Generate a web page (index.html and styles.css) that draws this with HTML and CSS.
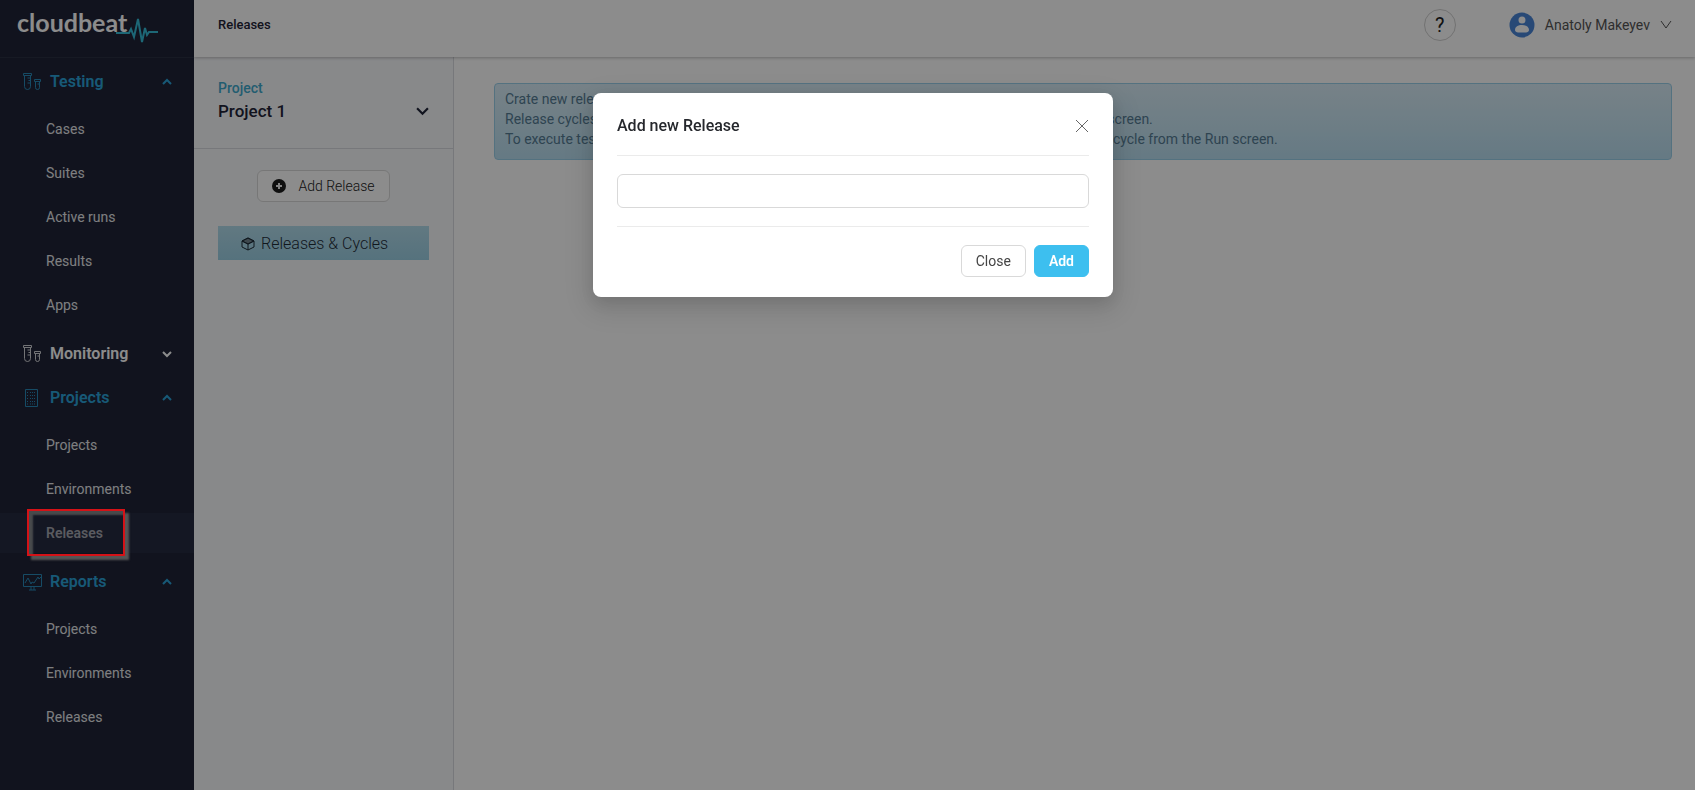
FILE: index.html
```html
<!DOCTYPE html>
<html lang="en">
<head>
    <meta charset="UTF-8">
    <meta name="viewport" content="width=device-width, initial-scale=1.0">
    <title>Releases - cloudbeat</title>
    <link rel="stylesheet" href="styles.css">
</head>
<body>

<!-- Shared icons -->
<svg class="icon-defs" aria-hidden="true">
    <symbol id="icon-tubes" viewBox="0 0 20 20">
        <path d="M1.500 1.500h8v2h-8zM2.500 3.500v11a3 3 0 0 0 6 0v-11M5.500 6h3M6.500 8.500h2M5.500 11h3M12.500 7.500h6v2h-6zM13.500 9.500v6a2 2 0 0 0 4 0v-6M15.500 12h2"/>
    </symbol>
    <symbol id="icon-list" viewBox="0 0 20 20">
        <path d="M3.500 1.500h12v17h-12z"/>
        <path stroke-dasharray="1 1" d="M5 4.500h2M5 7.500h2M5 10.500h2M5 13.500h2M5 16h2M8 4.500h6M8 7.500h6M8 10.500h6M8 13.500h6M8 16h6"/>
    </symbol>
    <symbol id="icon-monitor" viewBox="0 0 20 20">
        <path d="M1.500 2.500h18v12h-18zM9 15v3M12 15v3M7 18h7"/>
        <path d="M3 11l3-5 3 6 1-2 2 1 4-6 1 2 2-2"/>
    </symbol>
    <symbol id="icon-up" viewBox="0 0 12 12"><path d="M2 8l4-4 4 4"/></symbol>
    <symbol id="icon-down" viewBox="0 0 12 12"><path d="M2 4l4 4 4-4"/></symbol>
</svg>

<div class="layout">
    <aside class="sidebar">
        <a class="logo" href="#">
            <span>cloudbeat</span>
            <svg class="pulse" viewBox="0 0 42 28"><path d="M0 17h13l2-4 3 8 4-18 4 23 3-14 2 7 2-3h9"/></svg>
        </a>
        <nav class="menu">
            <button class="group open"><svg class="group-icon"><use href="#icon-tubes"/></svg>Testing<svg class="arrow"><use href="#icon-up"/></svg></button>
            <ul class="submenu">
                <li><a href="#">Cases</a></li>
                <li><a href="#">Suites</a></li>
                <li><a href="#">Active runs</a></li>
                <li><a href="#">Results</a></li>
                <li><a href="#">Apps</a></li>
            </ul>
            <button class="group"><svg class="group-icon"><use href="#icon-tubes"/></svg>Monitoring<svg class="arrow"><use href="#icon-down"/></svg></button>
            <button class="group open"><svg class="group-icon"><use href="#icon-list"/></svg>Projects<svg class="arrow"><use href="#icon-up"/></svg></button>
            <ul class="submenu">
                <li><a href="#">Projects</a></li>
                <li><a href="#">Environments</a></li>
                <li class="active"><a href="#">Releases</a><span class="callout"></span></li>
            </ul>
            <button class="group open"><svg class="group-icon"><use href="#icon-monitor"/></svg>Reports<svg class="arrow"><use href="#icon-up"/></svg></button>
            <ul class="submenu">
                <li><a href="#">Projects</a></li>
                <li><a href="#">Environments</a></li>
                <li><a href="#">Releases</a></li>
            </ul>
        </nav>
    </aside>

    <div class="page">
        <header class="topbar">
            <h1>Releases</h1>
            <button class="help" aria-label="Help">?</button>
            <button class="user">
                <svg class="avatar" viewBox="0 0 26 26">
                    <circle cx="13" cy="13" r="12.500" fill="#4a86d8"/>
                    <circle cx="13" cy="8" r="3.500" fill="#fff"/>
                    <path d="M6 18c0-3.500 3-5 7-5s7 1.500 7 5c0 1.500-1.500 2.500-3 2.500H9c-1.500 0-3-1-3-2.500z" fill="#fff"/>
                </svg>
                Anatoly Makeyev
                <svg class="user-arrow" viewBox="0 0 12 12"><path d="M1 2l5 7 5-7"/></svg>
            </button>
        </header>

        <div class="body">
            <section class="panel">
                <button class="project">
                    <span class="project-label">Project</span>
                    <span class="project-name">Project 1<svg class="project-arrow" viewBox="0 0 12 12"><path d="M1 3l5 5 5-5"/></svg></span>
                </button>
                <div class="releases">
                    <button class="btn add-release">
                        <svg class="plus" viewBox="0 0 14 14"><circle cx="7" cy="7" r="7"/><path d="M7 4v6M4 7h6"/></svg>
                        Add Release
                    </button>
                    <a class="tree-item" href="#">
                        <svg class="cube" viewBox="0 0 14 14"><path class="cube-top" d="M1 4l6-3 6 3-6 3z"/><path d="M1 4l6-3 6 3v6l-6 3-6-3zM1 4l6 3 6-3M7 7v6"/></svg>
                        Releases &amp; Cycles
                    </a>
                </div>
            </section>

            <main class="content">
                <div class="alert">
                    Crate new release by clicking on the Add Release button.<br>
                    Release cycles can be added to a selected release with right click menu of the Releases &amp; Cycles screen.<br>
                    To execute tests as part of a release or cycle, select the test case or suite and later set its release/cycle from the Run screen.
                </div>
            </main>
        </div>
    </div>
</div>

<div class="overlay">
    <form class="modal" role="dialog" aria-labelledby="modalTitle">
        <div class="modal-header">
            <h2 id="modalTitle">Add new Release</h2>
            <button type="button" class="modal-close" aria-label="Close dialog">
                <svg viewBox="0 0 14 14"><path d="M1 1l12 12M13 1L1 13"/></svg>
            </button>
        </div>
        <div class="modal-body">
            <input type="text" aria-label="Release name">
        </div>
        <div class="modal-footer">
            <button type="button" class="btn">Close</button>
            <button type="button" class="btn primary">Add</button>
        </div>
    </form>
</div>

</body>
</html>
```

FILE: styles.css
```css
* {
    box-sizing: border-box;
}

body {
    margin: 0;
    font-family: Roboto, "Liberation Sans", sans-serif;
    font-size: 14px;
    line-height: 20px;
    color: #3c3f48;
    background-color: #fff;
}

button, input {
    font: inherit;
    color: inherit;
}

button {
    cursor: pointer;
}

a {
    color: inherit;
    text-decoration: none;
}

svg {
    flex: none;
    fill: none;
    stroke: currentColor;
}

.icon-defs {
    position: absolute;
    width: 0;
    height: 0;
}

.layout {
    display: flex;
    min-height: 100vh;
}

/* Sidebar */
.sidebar {
    flex: none;
    width: 194px;
    background-color: #1f2438;
    color: #e6e7ea;
}

.logo {
    display: flex;
    height: 58px;
    padding: 7px 0 0 17px;
    border-bottom: 1px solid #2b3043;
    font-family: Lato, sans-serif;
    font-size: 25px;
    line-height: 30px;
    font-weight: 700;
    color: #fff;
}

.pulse {
    width: 42px;
    height: 28px;
    margin: 9px 0 0 -11px;
    color: #35bcd8;
    stroke-width: 2;
}

.menu {
    padding-top: 4px;
}

.group {
    display: flex;
    align-items: center;
    width: 100%;
    height: 40px;
    margin-bottom: 4px;
    padding: 0 21px 0 22px;
    border: none;
    background: none;
    font-size: 16px;
    font-weight: 600;
    color: #fff;
}

.group.open {
    color: #2ba3d9;
}

.group-icon {
    width: 20px;
    height: 20px;
    margin-right: 8px;
    stroke-width: 1;
    opacity: 0.8;
}

.arrow {
    width: 12px;
    height: 12px;
    margin-left: auto;
    stroke-width: 2;
}

.submenu {
    list-style: none;
    margin: 0;
    padding: 3px 0 5px;
}

.submenu li {
    position: relative;
    height: 40px;
    margin-bottom: 4px;
}

.submenu a {
    display: block;
    padding-left: 46px;
    line-height: 40px;
}

.submenu .active {
    background-color: #262b40;
    color: #a5a7b0;
    font-weight: 600;
}

/* Marker frame around the active item, drawn above the mask */
.callout {
    position: absolute;
    z-index: 20;
    left: 27px;
    top: -4px;
    width: 98px;
    height: 47px;
    border: 2px solid #d41217;
    box-shadow: 4px 4px 2px #555, inset 4px 4px 2px #484a4c;
}

/* Top bar */
.page {
    display: flex;
    flex-direction: column;
    flex: 1;
    min-width: 0;
}

.topbar {
    display: flex;
    align-items: center;
    height: 57px;
    padding: 0 23px 7px 24px;
    box-shadow: 0 1px 3px rgba(0, 0, 0, 0.25);
    z-index: 1;
}

.topbar h1 {
    margin: 0 auto 0 0;
    font-size: 13px;
    font-weight: 500;
    color: #1f2438;
}

.help {
    width: 32px;
    height: 32px;
    margin-right: 53px;
    padding: 0;
    border: 1px solid #d0d0d0;
    border-radius: 50%;
    background: none;
    font-size: 20px;
    color: #222;
}

.user {
    display: flex;
    align-items: center;
    padding: 0;
    border: none;
    background: none;
    color: #555;
}

.avatar {
    width: 26px;
    height: 26px;
    margin-right: 10px;
    stroke: none;
}

.user-arrow {
    width: 12px;
    height: 12px;
    margin-left: 10px;
}

/* Project panel */
.body {
    display: flex;
    flex: 1;
}

.panel {
    flex: none;
    width: 260px;
    background-color: #f8f9fc;
    border-right: 1px solid #d9dbe0;
}

.project {
    display: flex;
    flex-direction: column;
    width: 100%;
    height: 92px;
    padding: 21px 24px 0;
    border: none;
    border-bottom: 1px solid #d9dbe0;
    background: none;
    text-align: left;
}

.project-label {
    font-weight: 500;
    color: #3fa9cc;
}

.project-name {
    display: flex;
    align-items: center;
    justify-content: space-between;
    width: 100%;
    font-size: 17px;
    line-height: 26px;
    font-weight: 500;
    color: #1f2438;
}

.project-arrow {
    width: 13px;
    height: 13px;
    stroke-width: 2;
}

.releases {
    display: flex;
    flex-direction: column;
    align-items: center;
    gap: 24px;
    padding: 21px 24px;
}

.btn {
    height: 32px;
    padding: 0 14px;
    border: 1px solid #d9d9d9;
    border-radius: 6px;
    background-color: #fff;
    color: #444;
}

.add-release {
    display: flex;
    align-items: center;
    gap: 12px;
    font-weight: 300;
    color: #222;
}

.plus {
    width: 14px;
    height: 14px;
    fill: #1c1c1c;
    stroke: #eee;
    stroke-width: 2;
}

.plus circle {
    stroke: none;
}

.tree-item {
    display: flex;
    align-items: center;
    gap: 6px;
    width: 100%;
    height: 34px;
    padding: 2px 0 0 23px;
    background-image: linear-gradient(#b2dcec, #9cd0e4);
    font-size: 16px;
    font-weight: 300;
    color: #1f2c38;
}

.cube {
    width: 14px;
    height: 14px;
}

.cube-top {
    fill: #71848e;
}

/* Content */
.content {
    flex: 1;
    min-width: 0;
    padding: 26px 23px 26px 40px;
}

.alert {
    padding: 5px 10px 10px;
    border: 1px solid #9acfea;
    border-radius: 4px;
    background-image: linear-gradient(#d9edf7, #b9def0);
    color: #557c94;
}

/* Modal */
.overlay {
    position: fixed;
    z-index: 10;
    inset: 0;
    display: flex;
    align-items: flex-start;
    justify-content: center;
    padding: 93px 0 0 11px;
    background-color: rgba(0, 0, 0, 0.45);
}

.modal {
    width: 520px;
    padding: 21px 24px 20px;
    border-radius: 8px;
    background-color: #fff;
    box-shadow: 0 6px 16px rgba(0, 0, 0, 0.1), 0 9px 28px 8px rgba(0, 0, 0, 0.1);
}

.modal-header {
    display: flex;
    align-items: center;
    justify-content: space-between;
    padding-bottom: 17px;
    border-bottom: 1px solid #ebebeb;
}

.modal-header h2 {
    margin: 0;
    font-size: 16px;
    line-height: 24px;
    font-weight: 500;
    color: #26282d;
}

.modal-close {
    display: flex;
    padding: 0;
    border: none;
    background: none;
    color: #666;
}

.modal-close svg {
    width: 14px;
    height: 14px;
}

.modal-body {
    padding: 18px 0;
    border-bottom: 1px solid #ebebeb;
}

.modal-body input {
    display: block;
    width: 100%;
    height: 34px;
    padding: 4px 11px;
    border: 1px solid #d9d9d9;
    border-radius: 6px;
}

.modal-footer {
    display: flex;
    justify-content: flex-end;
    gap: 8px;
    padding-top: 18px;
}

.primary {
    border-color: #3dbfef;
    background-color: #3dbfef;
    color: #fff;
    font-weight: 600;
}
```
